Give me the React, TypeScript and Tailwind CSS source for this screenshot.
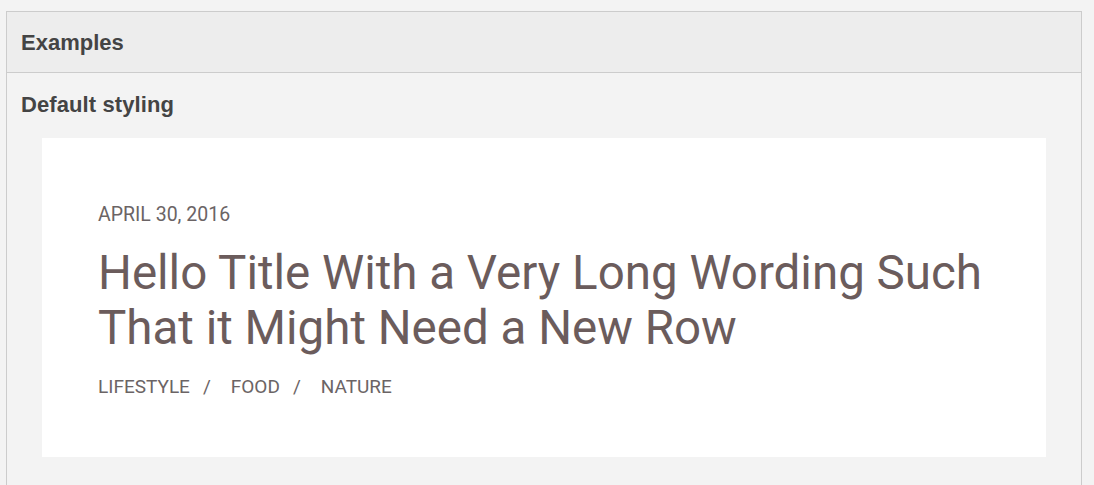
import React from "react";

export default function App() {
  const tags = ["LIFESTYLE", "FOOD", "NATURE"];
  return (
    <div className="min-h-screen bg-[#f3f3f3] pt-[11px] pl-[6px]">
      <div className="w-[1076px] border border-[#cccccc]">
        <div className="flex h-[61px] items-center border-b border-[#cccccc] bg-[#ededed] px-[14px]">
          <h2 className="text-[22px] font-bold leading-[25px] text-[#444444] [font-family:'Liberation_Sans',Arial,sans-serif]">
            Examples
          </h2>
        </div>
        <div className="bg-[#f3f3f3] px-[14px] pt-[19px] pb-[40px]">
          <h3 className="text-[22px] font-bold leading-[25px] tracking-[0.1px] text-[#444444] [font-family:'Liberation_Sans',Arial,sans-serif]">
            Default styling
          </h3>
          <div className="mx-[21px] mt-[21px] bg-white pl-[56px] pr-[40px] pt-[65px] pb-[58px] [font-family:Roboto,'Open_Sans',sans-serif]">
            <div className="text-[19.5px] leading-[24px] text-[#6b6465]">APRIL 30, 2016</div>
            <h1 className="mt-[19px] text-[47.5px] font-normal leading-[55px] text-[#6b5c5c]">
              Hello Title With a Very Long Wording Such
              <br />
              That it Might Need a New Row
            </h1>
            <div className="mt-[19px] flex items-center text-[19px] leading-[24px] text-[#6b6465]">
              {tags.map((t, i) => (
                <React.Fragment key={t}>
                  {i > 0 && <span className="ml-[13px] mr-[20px]">/</span>}
                  <span>{t}</span>
                </React.Fragment>
              ))}
            </div>
          </div>
        </div>
      </div>
    </div>
  );
}
